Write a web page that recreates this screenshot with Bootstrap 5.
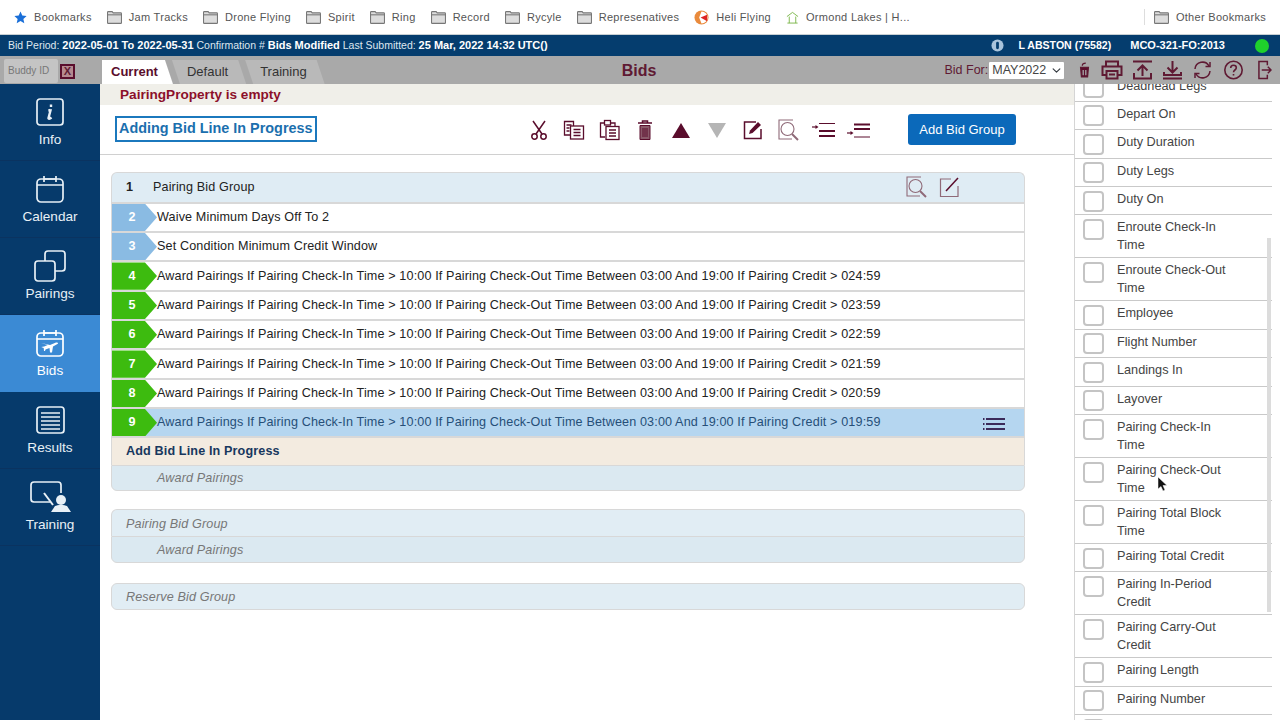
<!DOCTYPE html>
<html lang="en">
<head>
<meta charset="UTF-8">
<title>Bids</title>
<link href="https://cdn.jsdelivr.net/npm/bootstrap@5.3.0/dist/css/bootstrap.min.css" rel="stylesheet">
<script src="https://cdn.jsdelivr.net/npm/bootstrap@5.3.0/dist/js/bootstrap.bundle.min.js"></script>
<style>
html,body{height:720px;overflow:hidden}
body{font-family:"Liberation Sans",Arial,sans-serif;font-size:13px;color:#222;background:#fff}
svg{display:block;fill:none;stroke:currentColor}
.bookmarks{height:35px;padding:0 14px;font-size:11px;letter-spacing:.3px;color:#555;border-bottom:1px solid #c8d0d4}
.bookmarks .item{gap:7px;margin-right:15px}
.bookmarks .other{border-left:1px solid #ddd;padding-left:9px;margin-right:0}
.info-bar{height:21px;background:#053d6e;color:#dfe8f0;font-size:10.5px;padding:0 11px 0 8px}
.info-bar b{color:#fff;font-size:11px}
.user{font-weight:700;color:#fff;gap:19px;font-size:10.6px}
.user svg{margin-right:-5px}
.user span+span{font-size:11px}
.status{width:14px;height:14px;border-radius:50%;background:#1fd12c;margin-left:30px}
.tool-bar{height:28px;background:#a9a9a9;color:#5f1a33}
.buddy{width:100px;padding:2px 0 0 4px;gap:2px}
.buddy span{background:#c4c4c4;color:#777;font-size:10px;padding:5px 4px;width:54px;border-radius:2px;line-height:14px}
.buddy i{width:15px;height:15px;border:2px solid #5a0d2c;background:#b5898f;font:700 11px/11px "Liberation Sans",sans-serif;text-align:center}
.tabs{border:0;padding-left:2px;margin-top:4px;flex-wrap:nowrap;width:345px}
.tabs .nav-link{height:24px;padding:4px 18px 0 9px;margin:0 -1px 0 0;border:0;border-radius:0;background:#b9b9b9;color:#333;font-size:13px;line-height:16px;clip-path:polygon(0 0,calc(100% - 8px) 0,100% 100%,0 100%)}
.tabs .nav-link.active{background:#fff;color:#5a0d2c;font-weight:700;padding-right:15px}
.tabs .nav-item+.nav-item .nav-link{padding-left:15px;clip-path:polygon(0 0,calc(100% - 8px) 0,100% 100%,8px 100%,0 0)}
.page-title{width:388px;font-size:16px;font-weight:700;text-align:center;padding-top:2px}
.bid-for{font-size:12.5px;margin-left:auto;gap:1px}
.bid-for .form-select{width:75px;height:17px;padding:0 0 0 3px;font-size:12.5px;line-height:15px;border-radius:1px;border:0;color:#444;background-position:right 3px center;background-size:9px}
.top-icons{gap:9.3px;padding:0 8px 0 14px}
.top-icons svg:last-child{margin-left:5px}
.sidebar{width:100px;height:636px;background:#063a6b;flex:none}
.side-item{height:77px;color:#e8f0f6;font-size:13.6px;border-bottom:1px solid #0a3360;padding-top:7px}
.side-icon{height:42px;display:flex;align-items:center}
.side-item span{margin-top:-1px;line-height:16px}
.side-item.active{background:#3b8ad4;color:#fff;border-bottom-color:#3b8ad4}
.main{width:974px;height:636px}
.msg{height:21px;background:#f0efe9;color:#8c0f2a;font-size:13.6px;font-weight:700;padding-left:20px;line-height:21px}
.toolbar{height:50px;border-bottom:1px solid #d0d0d0;padding:0 58px 0 15px;color:#5a0d2c}
.progress-box{width:202px;height:26px;border:2px solid #1b78bd;color:#1b6fae;font-size:14.4px;font-weight:700;padding-left:2px;line-height:21px;margin-top:-2px;white-space:nowrap;flex:none}
.tool-icons{margin-left:204px;display:grid;grid-template-columns:repeat(10,35.55px);justify-items:center;align-items:center;margin-top:1px}
.btn-add{width:108px;height:31px;padding:0;font-size:13px;background:#0b69ba;border:0;color:#fff;margin-left:auto;border-radius:3px}
.bid-list{margin:17px 0 0 11px;width:914px;font-size:12.6px;letter-spacing:.135px}
.bid-list .list-group-item{padding:0;border-color:#d8d8d8;border-width:1px 1px 0;color:#222;display:flex;align-items:center;white-space:nowrap}
.bid-list .head{height:29.7px;background:#dfecf4;padding-left:14px!important}
.bid-list .head b{width:27px}
.bid-list .line{height:29.35px;border-top-width:2px}
.chev{width:45px;height:100%;color:#fff;font-weight:700;padding-right:5px;flex:none;display:flex;align-items:center;justify-content:center;clip-path:polygon(0 0,33px 0,45px 50%,33px 100%,0 100%)}
.chev.blue{background:#8abbe3}
.chev.green{background:#3dbb0f}
.bid-list .line.sel{background:#b5d6f0;color:#264f78}
.bid-list .add{height:29px;background:#f3ebe0;color:#17375e;font-weight:700;padding-left:14px!important;border-top-width:2px}
.bid-list .ghost{background:#e1edf4;color:#777;font-style:italic;height:27px;padding-top:2px}
.bid-list .ghost.in{padding-left:45px!important;background:#dbe9f1}
.bid-list .add+.ghost.in{height:26px;padding-top:0}
.bid-list .ghost.out{padding-left:14px!important}
.bid-list .list-group-item:last-child{border-bottom-width:1px}
.gap{margin-top:18px}
.gap+.gap{margin-top:20px}
.right-panel{width:206px;height:636px;overflow:hidden;border-left:1px solid #d5d5d5;position:relative;flex:none}
.prop-list{margin-top:-10.5px;width:197px;color:#444;font-size:12.7px;line-height:18px}
.prop-list .list-group-item{padding:3px 40px 3px 42px;min-height:28.4px;border:0;border-bottom:1px solid #c9c9c9;position:relative;color:#444;background:transparent}
.prop-list .form-check-input{position:absolute;left:8px;top:3.500px;width:21px;height:21px;margin:0;border:2px solid #c4c4c4;border-radius:4px}
.prop-list .form-check-input+span{display:block}
.scroll{position:absolute;right:9px;top:154px;width:4px;height:374px;background:#dcdcdc}
.cursor{position:absolute;left:82px;top:392px;width:10px;height:16px;color:#111}
</style>
</head>
<body>
<svg width="0" height="0" style="position:absolute">
  <symbol id="folder" viewBox="0 0 14 12"><path d="M.5 2.5V1.2c0-.4.3-.7.7-.7h3.6l1 1.2h7c.4 0 .7.3.7.7v8.4c0 .4-.3.7-.7.7H1.200c-.4 0-.7-.3-.7-.7z" fill="#ddd" stroke="#777"/><path d="M.5 3.500h13" stroke="#777"/></symbol>
</svg>

<div class="bookmarks d-flex align-items-center">
  <div class="item d-flex align-items-center"><svg width="13" height="13" viewBox="0 0 24 24" style="stroke:none;fill:#1a6fd8"><path d="M12 1l3.300 7.400 8 .8-6 5.400 1.700 7.900-7-4.100-7 4.100 1.700-7.900-6-5.400 8-.8z"/></svg>Bookmarks</div>
  <div class="item d-flex align-items-center"><svg width="15" height="13"><use href="#folder"/></svg>Jam Tracks</div>
  <div class="item d-flex align-items-center"><svg width="15" height="13"><use href="#folder"/></svg>Drone Flying</div>
  <div class="item d-flex align-items-center"><svg width="15" height="13"><use href="#folder"/></svg>Spirit</div>
  <div class="item d-flex align-items-center"><svg width="15" height="13"><use href="#folder"/></svg>Ring</div>
  <div class="item d-flex align-items-center"><svg width="15" height="13"><use href="#folder"/></svg>Record</div>
  <div class="item d-flex align-items-center"><svg width="15" height="13"><use href="#folder"/></svg>Rycyle</div>
  <div class="item d-flex align-items-center"><svg width="15" height="13"><use href="#folder"/></svg>Represenatives</div>
  <div class="item d-flex align-items-center"><svg width="15" height="15" viewBox="0 0 16 16" style="stroke:none"><circle cx="8" cy="8" r="7.500" fill="#e98a3c"/><path d="M8 1.500a6.500 6.500 0 0 1 6.500 6.500 6.500 6.500 0 0 1-6.500 6.500L5.500 8z" fill="#fff"/><path d="M14 5L7 8l7 4z" fill="#d22"/></svg>Heli Flying</div>
  <div class="item d-flex align-items-center"><svg width="13" height="13" viewBox="0 0 14 14" style="color:#7ab648"><path d="M1 6l6-4.500L13 6M3.500 6v7M10.500 6v7M1.500 13h11"/></svg>Ormond Lakes | H...</div>
  <div class="item other ms-auto d-flex align-items-center"><svg width="15" height="13"><use href="#folder"/></svg>Other Bookmarks</div>
</div>

<div class="info-bar d-flex align-items-center">
  <div>Bid Period: <b>2022-05-01 To 2022-05-31</b> Confirmation # <b>Bids Modified</b> Last Submitted: <b>25 Mar, 2022 14:32 UTC()</b></div>
  <div class="user d-flex align-items-center ms-auto">
    <svg width="13" height="13" viewBox="0 0 14 14" style="stroke:none"><circle cx="7" cy="7" r="6.500" fill="#a9c4dc"/><rect x="5.500" y="3" width="3" height="8" rx="1.500" fill="#053d6e"/></svg>
    <span>L ABSTON (75582)</span><span>MCO-321-FO:2013</span>
  </div>
  <div class="status"></div>
</div>

<div class="tool-bar d-flex align-items-center">
  <div class="buddy d-flex align-items-center"><span>Buddy ID</span><i>X</i></div>
  <ul class="nav nav-tabs tabs align-self-start">
    <li class="nav-item"><a class="nav-link active" href="#">Current</a></li>
    <li class="nav-item"><a class="nav-link" href="#">Default</a></li>
    <li class="nav-item"><a class="nav-link" href="#">Training</a></li>
  </ul>
  <div class="page-title">Bids</div>
  <div class="bid-for d-flex align-items-center">Bid For:
    <select class="form-select"><option>MAY2022</option></select>
  </div>
  <div class="top-icons d-flex align-items-center">
    <svg width="13" height="20" viewBox="0 0 15 20" stroke-width="1.500"><path d="M5 5c0-2 2-3 4-3" /><path d="M3 7h9l-1 11H4z" fill="#5a0d2c"/><path d="M6 10v6M9 10v6" stroke="#a9a9a9"/></svg>
    <svg width="22" height="20" viewBox="0 0 22 20" stroke-width="2"><path d="M5 6V1.500h12V6M5 15H1.500V6.500h19V15H17"/><rect x="5.500" y="11" width="11" height="7.500"/><path d="M8 14.500h6" /></svg>
    <svg width="21" height="20" viewBox="0 0 21 20" stroke-width="2"><path d="M1 1.500h19M10.500 6v10M5.500 10.500l5-5 5 5M2 13v5.500h17V13"/></svg>
    <svg width="21" height="20" viewBox="0 0 21 20" stroke-width="2"><path d="M10.500 1v11M5.500 7.500l5 5 5-5M2 12v3h17v-3M1 18.500h19"/></svg>
    <svg width="21" height="20" viewBox="0 0 21 20" stroke-width="1.500"><path d="M3 9a7.500 7.500 0 0 1 14-3M18 11a7.500 7.500 0 0 1-14 3"/><path d="M13.500 6.500H18V2M7.500 13.500H3V18"/></svg>
    <svg width="21" height="20" viewBox="0 0 21 20" stroke-width="1.600"><circle cx="10.500" cy="10" r="8.700"/><path d="M7.700 8c0-1.700 1.200-2.700 2.800-2.700s2.800 1 2.800 2.500c0 2.200-2.800 2.200-2.800 4.400M10.500 14v1.500"/></svg>
    <svg width="14" height="20" viewBox="0 0 15 20" stroke-width="1.600"><path d="M10 5V1H1v18h9v-4M4 10h10M10.500 6.500L14 10l-3.500 3.500"/></svg>
  </div>
</div>

<div class="d-flex">
  <nav class="sidebar d-flex flex-column">
    <a class="side-item d-flex flex-column align-items-center text-decoration-none"><div class="side-icon"><svg width="28" height="28" viewBox="0 0 28 28" stroke-width="1.700"><rect x="1" y="1" width="26" height="26" rx="3"/><path d="M15 6.500v2.500M14.500 12l-2 .5h2L12.500 20c-.2 1 1 1.200 3-.5" stroke-width="2.400"/></svg></div><span>Info</span></a>
    <a class="side-item d-flex flex-column align-items-center text-decoration-none"><div class="side-icon"><svg width="28" height="28" viewBox="0 0 28 28" stroke-width="1.700"><rect x="1" y="4" width="26" height="23" rx="4"/><path d="M1 10h26M8 1v6M20 1v6M8 4h12" /></svg></div><span>Calendar</span></a>
    <a class="side-item d-flex flex-column align-items-center text-decoration-none"><div class="side-icon"><svg width="32" height="32" viewBox="0 0 32 32" stroke-width="1.700"><rect x="1" y="11" width="20" height="20" rx="3"/><path d="M11 11V4c0-1.700 1.300-3 3-3h14c1.700 0 3 1.300 3 3v14c0 1.700-1.300 3-3 3h-7"/></svg></div><span>Pairings</span></a>
    <a class="side-item active d-flex flex-column align-items-center text-decoration-none"><div class="side-icon"><svg width="28" height="28" viewBox="0 0 28 28" stroke-width="1.700"><rect x="1" y="4" width="26" height="23" rx="4"/><path d="M1 10h26M8 1v6M20 1v6M8 4h12"/><path d="M5 14l9 2 6-2.500c2-.5 3 .7 1 1.700l-4 2.300-1 6h-2l-.5-4.500-4 1.500-.5 1.500H8l-.3-3-2.500-1 3-.5 3.500-1.500z" fill="#fff" stroke="none"/></svg></div><span>Bids</span></a>
    <a class="side-item d-flex flex-column align-items-center text-decoration-none"><div class="side-icon"><svg width="29" height="28" viewBox="0 0 29 28" stroke-width="1.700"><rect x="1" y="1" width="27" height="26" rx="3"/><path d="M5 7h19M5 11h19M5 15h19M5 19h19M5 23h19" stroke-width="1.500"/></svg></div><span>Results</span></a>
    <a class="side-item d-flex flex-column align-items-center text-decoration-none"><div class="side-icon"><svg width="41" height="32" viewBox="0 0 41 32" stroke-width="1.700"><path d="M20 21H4c-1.700 0-3-1.300-3-3V4c0-1.700 1.300-3 3-3h24c1.700 0 3 1.300 3 3v8"/><path d="M14 12l9 12" stroke-width="2"/><circle cx="31" cy="19" r="5" fill="currentColor" stroke="none"/><path d="M21 31l4-6c2-1.500 10-1.500 12 0l4 6z" fill="currentColor" stroke="none"/></svg></div><span>Training</span></a>
  </nav>

  <main class="main">
    <div class="msg">PairingProperty is empty</div>
    <div class="toolbar d-flex align-items-center">
      <div class="progress-box">Adding Bid Line In Progress</div>
      <div class="tool-icons">
        <svg width="18" height="20" viewBox="0 0 18 20" stroke-width="1.500"><path d="M3 1l9 13M15 1L6 14"/><circle cx="4.500" cy="16.500" r="2.700"/><circle cx="13.500" cy="16.500" r="2.700"/></svg>
        <svg width="22" height="20" viewBox="0 0 22 20" stroke-width="1.300"><path d="M7 15H1.500V1.500h9V6M3.500 5h5M3.500 8h3M3.500 11h3"/><rect x="7.500" y="6" width="13" height="13"/><path d="M10.500 9.500h7M10.500 12.500h7M10.500 15.500h7"/></svg>
        <svg width="22" height="22" viewBox="0 0 22 22" stroke-width="1.300"><path d="M6 18H1.500V4h4M12 4h4v3"/><rect x="5.500" y="1.500" width="6" height="4.500"/><rect x="7" y="7.500" width="13" height="13"/><path d="M10 11h7M10 14h7M10 17h7"/></svg>
        <svg width="14" height="20" viewBox="0 0 14 20" stroke-width="1"><path d="M0 3h14M4.500 3V1h5v2" stroke-width="1.500"/><path d="M2 5.500h10v14H2z" fill="#8a5a6a"/><path d="M5 8v9M7 8v9M9 8v9" stroke="#5a0d2c"/></svg>
        <svg width="18" height="15" viewBox="0 0 18 15" style="stroke:none;fill:#5a0d2c"><path d="M9 0l9 15H0z"/></svg>
        <svg width="18" height="15" viewBox="0 0 18 15" style="stroke:none;fill:#b5b5b5"><path d="M0 0h18L9 15z"/></svg>
        <svg width="19" height="20" viewBox="0 0 19 20" stroke-width="1.500"><path d="M13 2H1.500v16.500H18V9"/><path d="M6 14l1-3.500L15 2l3 3-8.500 8z" fill="currentColor" stroke="none"/></svg>
        <svg width="23" height="22" viewBox="0 0 23 22" stroke-width="1.100" style="color:#8f6a78;margin-left:3px"><path d="M15 1H1v19h13"/><circle cx="9.500" cy="10" r="6.500"/><path d="M14 15l6 6" stroke-width="2"/></svg>
        <svg width="23" height="15" viewBox="0 0 23 15" stroke-width="2"><path d="M7 .5h16" stroke-width="1"/><path d="M7 8h16M7 13h16" stroke-width="2.200"/><path d="M0 4h4" stroke-width="1.200"/><path d="M3.500 2l3 2-3 2z" fill="currentColor" stroke="none"/></svg>
        <svg width="23" height="15" viewBox="0 0 23 15" stroke-width="2"><path d="M7 1.500h16M7 6h16" stroke-width="2.200"/><path d="M7 14h16" stroke-width="1"/><path d="M0 10h4" stroke-width="1.200"/><path d="M3.500 8l3 2-3 2z" fill="currentColor" stroke="none"/></svg>
      </div>
      <button type="button" class="btn btn-primary btn-add">Add Bid Group</button>
    </div>

    <div class="bid-list">
      <ul class="list-group" id="bidLines">
        <li class="list-group-item head justify-content-between"><div class="d-flex"><b>1</b>Pairing Bid Group</div>
          <div class="d-flex align-items-center" style="color:#5a0d2c;gap:10px;margin-right:64px">
            <svg width="23" height="22" viewBox="0 0 23 22" stroke-width="1.100" style="color:#8f6a78"><path d="M15 1H1v19h13"/><circle cx="9.500" cy="10" r="6.500"/><path d="M14 15l6 6" stroke-width="2"/></svg>
            <svg width="21" height="21" viewBox="0 0 21 21" stroke-width="1.200"><path d="M12 2H1.500v17.500H19V9" style="color:#8f6a78"/><path d="M7 14L19 1" stroke-width="1.500"/></svg>
          </div>
        </li>
      </ul>
      <ul class="list-group gap">
        <li class="list-group-item ghost out">Pairing Bid Group</li>
        <li class="list-group-item ghost in">Award Pairings</li>
      </ul>
      <ul class="list-group gap">
        <li class="list-group-item ghost out">Reserve Bid Group</li>
      </ul>
    </div>
  </main>

  <aside class="right-panel">
    <ul class="list-group list-group-flush prop-list" id="props"></ul>
    <div class="scroll"></div>
    <svg class="cursor" viewBox="0 0 10 16" style="stroke:#fff;stroke-width:.5;fill:#111"><path d="M1 1v12l3-2.500 2 4.500 2-1-2-4.500h4z"/></svg>
  </aside>
</div>

<script>
  // lines of the first bid group
  var award = "Award Pairings If Pairing Check-In Time > 10:00 If Pairing Check-Out Time Between 03:00 And 19:00 If Pairing Credit > ";
  var lines = [
    { n: 2, c: "blue", t: "Waive Minimum Days Off To 2" },
    { n: 3, c: "blue", t: "Set Condition Minimum Credit Window" },
    { n: 4, c: "green", t: award + "024:59" },
    { n: 5, c: "green", t: award + "023:59" },
    { n: 6, c: "green", t: award + "022:59" },
    { n: 7, c: "green", t: award + "021:59" },
    { n: 8, c: "green", t: award + "020:59" },
    { n: 9, c: "green", t: award + "019:59", sel: true }
  ];
  var ul = document.getElementById("bidLines");
  lines.forEach(function(l) {
    var li = document.createElement("li");
    li.className = "list-group-item line" + (l.sel ? " sel" : "");
    var chev = document.createElement("div");
    chev.className = "chev " + l.c;
    chev.textContent = l.n;
    li.appendChild(chev);
    li.appendChild(document.createTextNode(l.t));
    if (l.sel) {
      li.insertAdjacentHTML("beforeend", '<svg class="ms-auto" width="22" height="14" viewBox="0 0 22 14" stroke-width="2" style="color:#3b2a5a;margin:3px 19px 0 0"><path d="M0 2h1.500M3 2h19M0 7h1.500M3 7h19M0 12h1.500M3 12h19"/></svg>');
    }
    ul.appendChild(li);
  });
  ul.insertAdjacentHTML("beforeend", '<li class="list-group-item add">Add Bid Line In Progress</li><li class="list-group-item ghost in">Award Pairings</li>');

  var props = ["Deadhead Legs", "Depart On", "Duty Duration", "Duty Legs", "Duty On", "Enroute Check-In Time", "Enroute Check-Out Time", "Employee", "Flight Number", "Landings In", "Layover", "Pairing Check-In Time", "Pairing Check-Out Time", "Pairing Total Block Time", "Pairing Total Credit", "Pairing In-Period Credit", "Pairing Carry-Out Credit", "Pairing Length", "Pairing Number", "Pairing Start"];
  var propList = document.getElementById("props");
  props.forEach(function(p) {
    var li = document.createElement("li");
    li.className = "list-group-item";
    li.innerHTML = '<input class="form-check-input" type="checkbox"><span>' + p + '</span>';
    propList.appendChild(li);
  });
</script>
</body>
</html>
